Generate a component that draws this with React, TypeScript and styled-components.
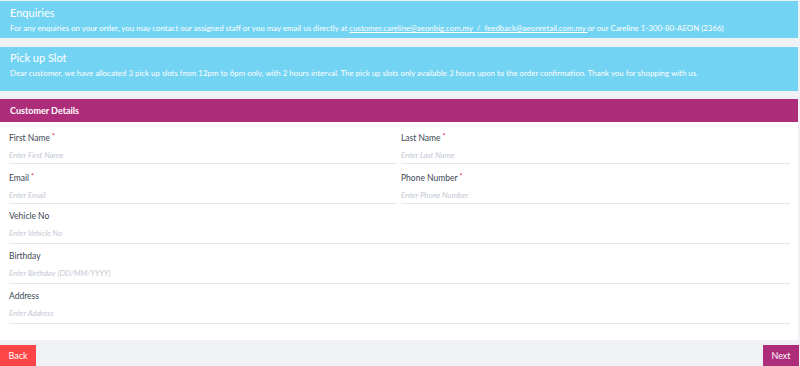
import React from 'react'
import styled, { createGlobalStyle } from 'styled-components'

const GlobalStyle = createGlobalStyle`
  html, body {
    margin: 0;
    padding: 0;
    background: #f0f1f5;
    font-family: Lato, "Open Sans", sans-serif;
  }
`

interface IField {
  label: string
  placeholder: string
  required?: boolean
}

const rows: IField[][] = [
  [
    { label: 'First Name', placeholder: 'Enter First Name', required: true },
    { label: 'Last Name', placeholder: 'Enter Last Name', required: true },
  ],
  [
    { label: 'Email', placeholder: 'Enter Email', required: true },
    { label: 'Phone Number', placeholder: 'Enter Phone Number', required: true },
  ],
  [{ label: 'Vehicle No', placeholder: 'Enter Vehicle No' }],
  [{ label: 'Birthday', placeholder: 'Enter Birthday (DD/MM/YYYY)' }],
  [{ label: 'Address', placeholder: 'Enter Address' }],
]

const Field = ({ label, placeholder, required }: IField) => (
  <>
    <Label>
      {label}
      {required && <Star>*</Star>}
    </Label>
    <Input placeholder={placeholder} />
  </>
)

const App = () => {
  return (
    <>
      <GlobalStyle />
      <Page>
        <InfoBox>
          <InfoTitle>Enquiries</InfoTitle>
          <InfoText>
            For any enquiries on your order, you may contact our assigned staff or you may email us directly at{' '}
            <Link>customer.careline@aeonbig.com.my&nbsp; / &nbsp;feedback@aeonretail.com.my </Link>
            or our Careline 1-300-80-AEON (2366)
          </InfoText>
        </InfoBox>
        <InfoBox tall>
          <InfoTitle>Pick up Slot</InfoTitle>
          <InfoText>
            Dear customer, we have allocated 3 pick up slots from 12pm to 6pm only, with 2 hours interval. The pick up
            slots only available 3 hours upon to the order confirmation. Thank you for shopping with us.
          </InfoText>
        </InfoBox>
        <Card>
          <CardHeader>Customer Details</CardHeader>
          <Form>
            {rows.map(row =>
              row.map(f => (
                <FieldWrap key={f.label} full={row.length === 1}>
                  <Field {...f} />
                </FieldWrap>
              ))
            )}
          </Form>
        </Card>
        <Footer>
          <Button color="#fd4548">Back</Button>
          <Button color="#ae2d7b">Next</Button>
        </Footer>
      </Page>
    </>
  )
}

export default App

const Page = styled.div`
  width: 800px;
  height: 366px;
  padding-top: 1px;
  box-sizing: border-box;
  display: flex;
  flex-direction: column;
`

const InfoBox = styled.div<{ tall?: boolean }>`
  background: #73d3f2;
  color: #fff;
  width: 798px;
  height: ${props => (props.tall ? '44px' : '37px')};
  box-sizing: border-box;
  padding: ${props => (props.tall ? '4px' : '5px')} 10px 0;
  margin-bottom: ${props => (props.tall ? '8px' : '9px')};
`

const InfoTitle = styled.div`
  font-size: 11px;
  line-height: 14px;
`

const InfoText = styled.div`
  font-size: 7.9px;
  line-height: 14px;
  margin-top: 1px;
  white-space: nowrap;
`

const Link = styled.span`
  text-decoration: underline;
`

const Card = styled.div`
  background: #fff;
  width: 798px;
`

const CardHeader = styled.div`
  background: #ae2d7b;
  color: #fff;
  font-size: 9px;
  font-weight: 700;
  height: 23px;
  line-height: 24px;
  padding-left: 10px;
`

const Form = styled.div`
  padding: 5px 8px 16px 9px;
  display: grid;
  grid-template-columns: 388px 389px;
  column-gap: 4px;
  row-gap: 3px;
`

const FieldWrap = styled.div<{ full?: boolean }>`
  grid-column: ${props => (props.full ? '1 / -1' : 'auto')};
  display: flex;
  flex-direction: column;
  height: 37px;
  padding-top: 2px;
  border-bottom: 1px solid #e4e6ea;
  box-sizing: border-box;
`

const Label = styled.div`
  font-size: 8.5px;
  color: #3c4654;
  line-height: 14px;
`

const Star = styled.span`
  color: #e8283f;
  font-size: 7px;
  margin-left: 2px;
  vertical-align: 2px;
`

const Input = styled.input`
  border: none;
  outline: none;
  padding: 0;
  margin-top: 4px;
  font-family: Lato, "Open Sans", sans-serif;
  font-size: 7.8px;
  height: 12px;
  background: transparent;
  &::placeholder {
    color: #c3c8d2;
    font-style: italic;
  }
`

const Footer = styled.div`
  display: flex;
  justify-content: space-between;
  align-items: flex-end;
  flex: 1;
  padding-right: 1px;
`

const Button = styled.button<{ color: string }>`
  background: ${props => props.color};
  color: #fff;
  border: none;
  font-family: Lato, "Open Sans", sans-serif;
  font-size: 9px;
  width: 36px;
  height: 21px;
  padding: 0;
`
